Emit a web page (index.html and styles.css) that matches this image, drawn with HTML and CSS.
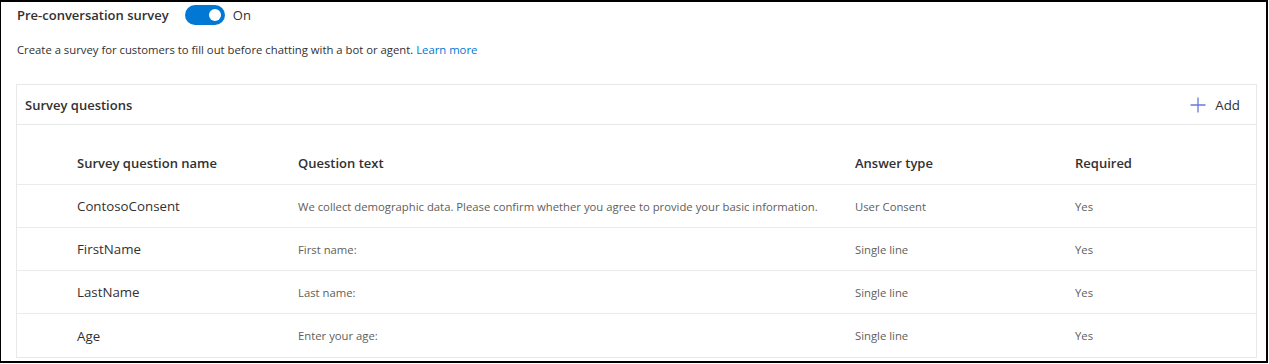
FILE: index.html
```html
<!DOCTYPE html>
<html lang="en">
<head>
<meta charset="utf-8">
<title>Pre-conversation survey</title>
<link rel="stylesheet" href="styles.css">
</head>
<body>
<div class="frame">
  <div class="top">
    <span class="title">Pre-conversation survey</span>
    <span class="toggle"><span class="knob"></span></span>
    <span class="state">On</span>
  </div>
  <p class="desc">Create a survey for customers to fill out before chatting with a bot or agent. <a class="link" href="#">Learn more</a></p>
  <div class="card">
    <div class="card-head">
      <span class="card-title">Survey questions</span>
      <button class="add" type="button">
        <svg class="plus" width="16" height="16" viewBox="0 0 16 16"><path d="M8 0.5v15M0.5 8h15" stroke="#6a78d8" stroke-width="1.3" fill="none"/></svg>
        <span>Add</span>
      </button>
    </div>
    <div class="grid head-row">
      <span></span>
      <span class="th">Survey question name</span>
      <span class="th">Question text</span>
      <span class="th">Answer type</span>
      <span class="th">Required</span>
    </div>
    <div class="grid row">
      <span></span>
      <span class="name">ContosoConsent</span>
      <span class="cell">We collect demographic data. Please confirm whether you agree to provide your basic information.</span>
      <span class="cell">User Consent</span>
      <span class="cell">Yes</span>
    </div>
    <div class="grid row">
      <span></span>
      <span class="name">FirstName</span>
      <span class="cell">First name:</span>
      <span class="cell">Single line</span>
      <span class="cell">Yes</span>
    </div>
    <div class="grid row">
      <span></span>
      <span class="name">LastName</span>
      <span class="cell">Last name:</span>
      <span class="cell">Single line</span>
      <span class="cell">Yes</span>
    </div>
    <div class="grid row last">
      <span></span>
      <span class="name">Age</span>
      <span class="cell">Enter your age:</span>
      <span class="cell">Single line</span>
      <span class="cell">Yes</span>
    </div>
  </div>
</div>
</body>
</html>
```
FILE: styles.css
```css
* { box-sizing: border-box; }
html, body { margin: 0; padding: 0; background: #fff; }
body {
  font-family: "Open Sans", "Noto Sans", sans-serif;
  color: #323130;
  width: 1269px;
  height: 364px;
}
.frame {
  width: 1268px;
  height: 363px;
  border-top: 2px solid #000;
  border-left: 1px solid #000;
  border-right: 2px solid #000;
  border-bottom: 2px solid #000;
  overflow: hidden;
}
.top {
  display: flex;
  align-items: center;
  height: 26px;
  padding-left: 16px;
}
.title {
  font-size: 13px;
  font-weight: 600;
  color: #323130;
}
.toggle {
  display: flex;
  align-items: center;
  justify-content: flex-end;
  width: 40px;
  height: 20px;
  margin-left: 16px;
  padding-right: 4px;
  border-radius: 10px;
  background: #0078d4;
}
.knob {
  width: 12px;
  height: 12px;
  border-radius: 50%;
  background: #fff;
}
.state {
  margin-left: 8px;
  font-size: 13px;
  color: #323130;
}
.desc {
  margin: 14px 0 0 16px;
  font-size: 11.3px;
  line-height: 16px;
  color: #323130;
}
.link { color: #0078d4; text-decoration: none; }
.card {
  margin: 26px 9px 0 15px;
  border: 1px solid #e8e8e8;
}
.card-head {
  display: flex;
  align-items: center;
  justify-content: space-between;
  height: 40px;
  padding: 0 16px 0 8px;
  border-bottom: 1px solid #e8e8e8;
}
.card-title { font-size: 13px; font-weight: 600; color: #323130; }
.add {
  display: flex;
  align-items: center;
  gap: 9px;
  border: 0;
  background: none;
  padding: 0;
  font-family: inherit;
  font-size: 13.3px;
  color: #323130;
}
.grid {
  display: grid;
  grid-template-columns: 60px 221px 557px 220px 1fr;
  align-items: center;
  border-bottom: 1px solid #edebe9;
}
.head-row { height: 60px; padding-top: 16px; }
.row { height: 43px; }
.row.last { border-bottom: 0; }
.th { font-size: 13px; font-weight: 600; color: #323130; }
.name { font-size: 13.3px; color: #323130; }
.cell { font-size: 11.3px; color: #605e5c; }
```
